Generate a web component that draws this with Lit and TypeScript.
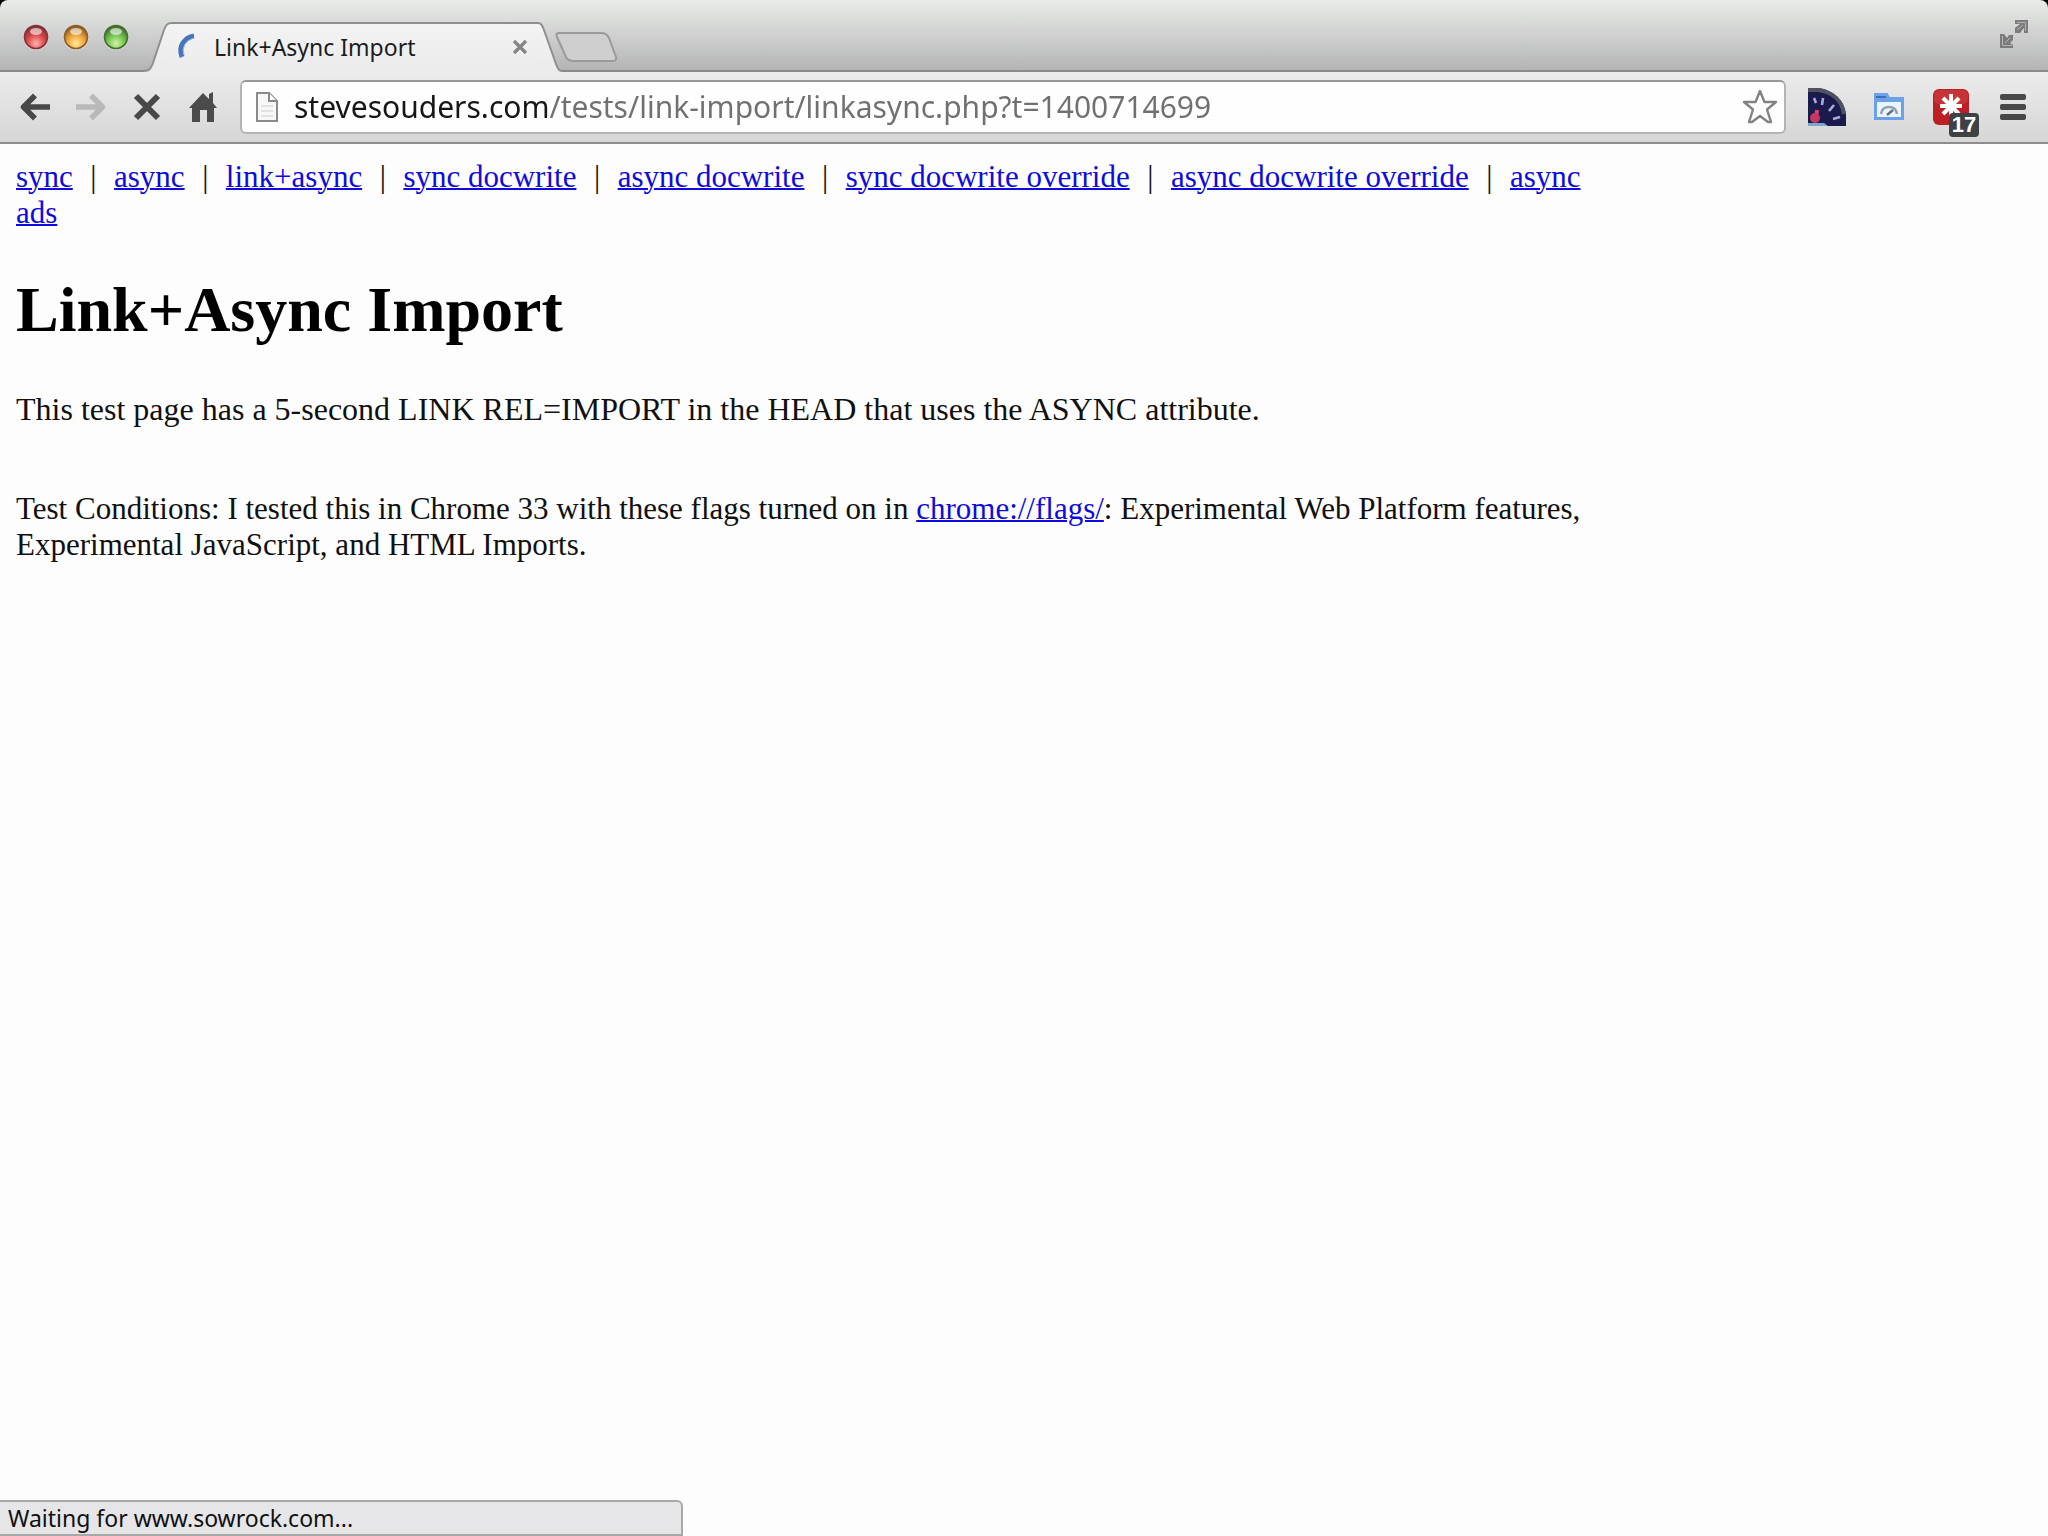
import { LitElement, html, css } from "lit";
import { customElement, property, state } from "lit/decorators.js";

const NAV_LINKS = [
  "sync",
  "async",
  "link+async",
  "sync docwrite",
  "async docwrite",
  "sync docwrite override",
  "async docwrite override",
  "async ads",
];

@customElement("tab-strip")
class TabStrip extends LitElement {
  @property() label = "";

  static styles = css`
    :host {
      display: block;
      font-family: "Noto Sans", "Open Sans", sans-serif;
    }
    .strip {
      display: flex;
      align-items: flex-end;
      height: 72px;
      box-sizing: border-box;
      padding: 0 18px 0 22px;
      background:
        linear-gradient(#8b8b8b, #8b8b8b) left bottom / 100% 2px no-repeat,
        linear-gradient(#e9ebe9 0, #dcdedc 18px, #b4b4b5 70px);
    }
    .lights {
      display: flex;
      gap: 12px;
      align-self: flex-start;
      padding-top: 23px;
    }
    button {
      appearance: none;
      border: 0;
      padding: 0;
      margin: 0;
      background: none;
      display: block;
    }
    svg {
      display: block;
    }
    .tab {
      display: flex;
      height: 50px;
      margin-left: 14px;
    }
    .face {
      display: flex;
      align-items: center;
      width: 366px;
      box-sizing: border-box;
      border-top: 2px solid #8e8f8e;
      background: linear-gradient(#f3f3f3, #ebebec);
      padding: 0 10px 3px 3px;
    }
    .title {
      flex: 1;
      padding-left: 17px;
      font-size: 23px;
      line-height: 30px;
      color: #1c1c1c;
    }
    .new {
      margin: 0 0 8px -9px;
    }
    .full {
      margin: 0 0 22px auto;
    }
  `;

  private light(name: string, edge: string, body: string, glow: string) {
    const id = "g-" + name.toLowerCase();
    return html`<button aria-label=${name}>
      <svg width="28" height="28" viewBox="0 0 28 28">
        <defs>
          <radialGradient id=${id} cx=".5" cy=".78" r=".7">
            <stop offset="0" stop-color=${glow} />
            <stop offset=".55" stop-color=${body} />
            <stop offset="1" stop-color=${edge} />
          </radialGradient>
        </defs>
        <circle cx="14" cy="15" r="12.5" fill="#eee" opacity=".5" />
        <circle cx="14" cy="14" r="11.5" fill="url(#${id})" stroke=${edge} stroke-width="1.6" />
        <ellipse cx="14" cy="8.5" rx="6" ry="3.4" fill="#fff" opacity=".6" />
      </svg>
    </button>`;
  }

  render() {
    return html`<div class="strip">
      <div class="lights">
        ${this.light("Close", "#863338", "#dd474b", "#ffb3ac")}
        ${this.light("Minimize", "#8f5e24", "#eea33c", "#ffeb9a")}
        ${this.light("Zoom", "#44702f", "#72c250", "#d1f7a2")}
      </div>
      <div class="tab">
        <svg width="28" height="50" viewBox="0 0 28 50">
          <defs>
            <linearGradient id="face" x1="0" y1="0" x2="0" y2="1">
              <stop offset="0" stop-color="#f3f3f3" />
              <stop offset="1" stop-color="#ebebec" />
            </linearGradient>
          </defs>
          <path d="M0 50V49C6 49 7 46 9 41L20 8C22 3 23 1 28 1V50Z" fill="url(#face)" />
          <path d="M0 49C6 49 7 46 9 41L20 8C22 3 23 1 28 1" fill="none" stroke="#8e8f8e" stroke-width="2" />
        </svg>
        <div class="face">
          <svg width="22" height="28" viewBox="0 0 22 28" aria-label="Loading">
            <path d="M19 3Q12 4 8 10T7 24" fill="none" stroke="#4774b8" stroke-width="5" />
            <path d="M19 5Q12 7 9.500 12T9 22" fill="none" stroke="#9cbce4" stroke-width="1" />
          </svg>
          <span class="title">${this.label}</span>
          <button aria-label="Close tab">
            <svg width="16" height="16" viewBox="0 0 16 16">
              <path d="M2 2L14 14M14 2L2 14" stroke="#858585" stroke-width="3.2" />
            </svg>
          </button>
        </div>
        <svg width="24" height="50" viewBox="0 0 24 50">
          <path d="M0 1C3 1 4 3 6 8L18 42C20 47 21 49 24 49V50H0Z" fill="url(#face)" />
          <path d="M0 1C3 1 4 3 6 8L18 42C20 47 21 49 24 49" fill="none" stroke="#8e8f8e" stroke-width="2" />
        </svg>
      </div>
      <button class="new" aria-label="New tab">
        <svg width="66" height="34" viewBox="0 0 66 34">
          <path d="M6 3H48Q54 3 56 8L63 27Q64 31 60 31H21Q15 31 13 27L4 7Q2 3 6 3Z" fill="#cfcfd0" stroke="#999a99" stroke-width="2" />
        </svg>
      </button>
      <button class="full" aria-label="Enter full screen">
        <svg width="32" height="32" viewBox="0 0 32 32" fill="#7c7c7c">
          <path d="M17 2H30V15H26V10L22 15H17V10L22 6H17Z" />
          <path d="M2 16H6L9 20L11 17H15V22L12 25L15 27V30H2Z" />
          <path d="M19 4.500H27.500V13M4.500 18V27.500H14M19 12L25 7M7 25L12 20" fill="none" stroke="#b4b4b4" stroke-width="1" />
        </svg>
      </button>
    </div>`;
  }
}

@customElement("nav-toolbar")
class NavToolbar extends LitElement {
  @property() host = "";
  @property() path = "";

  static styles = css`
    :host {
      display: block;
      font-family: "Noto Sans", "Open Sans", sans-serif;
    }
    .bar {
      display: flex;
      align-items: center;
      gap: 19px;
      height: 72px;
      box-sizing: border-box;
      padding: 0 14px 1px 16px;
      border-bottom: 2px solid #8d8d8d;
      background: linear-gradient(#ececed, #d6d6d7);
    }
    button {
      appearance: none;
      border: 0;
      padding: 0;
      background: none;
      display: grid;
      place-items: center;
      flex: none;
      width: 37px;
      height: 52px;
    }
    .wide {
      width: 43px;
    }
    svg {
      display: block;
      overflow: visible;
    }
    .omnibox {
      flex: 1;
      display: flex;
      align-items: center;
      height: 54px;
      box-sizing: border-box;
      padding: 0 3px 0 13px;
      border: 2px solid #b4b4b5;
      border-top-color: #979797;
      border-radius: 6px;
      background: #fefefe;
    }
    .url {
      flex: 1;
      min-width: 0;
      height: 42px;
      border: 0;
      outline: 0;
      padding: 0 0 0 15px;
      font-family: inherit;
      font-size: 30px;
      color: transparent;
      caret-color: #111;
      background: linear-gradient(to right, #161616 269px, #707070 269px);
      background-clip: text;
      -webkit-background-clip: text;
    }
    .badged {
      position: relative;
    }
    .count {
      position: absolute;
      left: 20px;
      top: 32px;
      width: 30px;
      height: 24px;
      border-radius: 4px;
      background: #3e4245;
      color: #fff;
      font-size: 22px;
      line-height: 24px;
      font-weight: 700;
      text-align: center;
    }
  `;

  render() {
    return html`<div class="bar">
      <button aria-label="Back">
        <svg width="32" height="28" viewBox="0 0 32 28" fill="none" stroke="#484848" stroke-width="5.500">
          <path d="M4 14H31M16 2.500L4.500 14L16 25.500" stroke-linejoin="round" />
        </svg>
      </button>
      <button aria-label="Forward">
        <svg width="32" height="28" viewBox="0 0 32 28" fill="none" stroke="#b9b9ba" stroke-width="5.500">
          <path d="M1 14H28M16 2.500L27.500 14L16 25.500" stroke-linejoin="round" />
        </svg>
      </button>
      <button aria-label="Stop">
        <svg width="28" height="28" viewBox="0 0 28 28">
          <path d="M3 3L25 25M25 3L3 25" stroke="#484848" stroke-width="6" />
        </svg>
      </button>
      <button aria-label="Home">
        <svg width="28" height="32" viewBox="0 0 28 32" fill="#4b4b4b">
          <path d="M14 2L20 8V3L24 1V12L28 17H25V31H18V19H11V31H3V17H0Z" />
        </svg>
      </button>
      <div class="omnibox">
        <svg width="24" height="32" viewBox="0 0 24 32">
          <path d="M2 2H14L22 10V30H2Z" fill="#f7f7f7" stroke="#8a8a8a" stroke-width="2" />
          <path d="M14 2V10H22" fill="#fff" stroke="#8a8a8a" stroke-width="2" />
          <path d="M6 15H18M6 20H18M6 25H18" stroke="#e2e2e2" stroke-width="2" />
        </svg>
        <input class="url" type="text" aria-label="Address" spellcheck="false" .value=${this.host + this.path} />
        <button class="wide" aria-label="Bookmark this page">
          <svg width="36" height="36" viewBox="0 0 36 36">
            <path d="M18 2L22.500 13H34L25 20.500L29 33H26L18 27L10 33H7L11 20.500L2 13H13.500Z" fill="#fff" stroke="#828282" stroke-width="2.400" stroke-linejoin="round" />
          </svg>
        </button>
      </div>
      <button class="wide" aria-label="Speed gauge">
        <svg width="38" height="38" viewBox="0 0 38 38">
          <path d="M0 0H10C26 2 36 12 38 26V38H0Z" fill="#1b1a4d" />
          <path d="M0 2H10C25 4 34 13 36 26" fill="none" stroke="#50525f" stroke-width="4" />
          <path d="M6 10L8 15M15 10L14 17M26 17L21 23M32 29L25 31" stroke="#a9abe0" stroke-width="2.600" />
          <path d="M9 22L8 32" stroke="#e0435d" stroke-width="4" />
          <circle cx="7" cy="30" r="5" fill="#c43861" />
          <path d="M0 35H16L20 38H0Z" fill="#7ba6cf" />
        </svg>
      </button>
      <button class="wide" aria-label="Page speed">
        <svg width="32" height="28" viewBox="0 0 32 28">
          <path d="M2 1H14L16 5H30V26H2Z" fill="#6ba1e6" stroke="#6ba1e6" stroke-width="2" />
          <path d="M3 4H13" stroke="#3d6eb0" stroke-width="2" />
          <path d="M4 9H28V24H4Z" fill="#eaf4fe" />
          <path d="M8 21Q9 14 16 14T24 21" fill="none" stroke="#8fa3b0" stroke-width="2.500" />
          <path d="M14 22L20 17" stroke="#61727d" stroke-width="2.500" />
        </svg>
      </button>
      <button class="wide badged" aria-label="Passwords">
        <svg width="42" height="38" viewBox="0 0 42 38">
          <rect x="3" y="1" width="36" height="36" rx="6" fill="#bd1f25" />
          <rect x="4" y="2" width="34" height="14" rx="5" fill="#d2494b" opacity=".5" />
          <path d="M21 6V30M10 18H32M13 10L29 26M29 10L13 26" stroke="#fff" stroke-width="4" />
        </svg>
        <span class="count">17</span>
      </button>
      <button class="wide" aria-label="Menu">
        <svg width="26" height="28" viewBox="0 0 26 28" fill="#484848">
          <rect y="1" width="26" height="6" rx="2" />
          <rect y="11" width="26" height="6" rx="2" />
          <rect y="21" width="26" height="6" rx="2" />
        </svg>
      </button>
    </div>`;
  }
}

@customElement("app-root")
class AppRoot extends LitElement {
  @state() private links = NAV_LINKS;

  static styles = css`
    :host {
      display: flex;
      flex-direction: column;
      min-height: 100vh;
      background: #fdfdfd;
      color: #101010;
      font-family: "Liberation Serif", "Times New Roman", serif;
      font-size: 31px;
      line-height: 36px;
    }
    .chrome {
      background: #000;
    }
    .top {
      display: block;
      border-radius: 8px 8px 0 0;
      overflow: hidden;
    }
    main {
      flex: 1;
      padding: 15px 16px;
      max-width: 1590px;
    }
    a {
      color: #0f0bdc;
      text-decoration: underline;
      text-decoration-thickness: 2px;
    }
    .sep {
      margin: 0 2px;
    }
    h1 {
      margin: 43px 0 45px;
      font-size: 64px;
      line-height: 72px;
      font-weight: 700;
      color: #000;
    }
    p {
      margin: 0 0 64px;
    }
    .lead {
      font-size: 32px;
    }
    .status {
      align-self: flex-start;
      box-sizing: border-box;
      width: 33.35%;
      padding: 0 8px;
      border: 2px solid #a8a8a8;
      border-left-width: 0;
      border-radius: 0 6px 0 0;
      background: #e6e6e8;
      font-family: "Noto Sans", "Open Sans", sans-serif;
      font-size: 23px;
      line-height: 32px;
    }
  `;

  render() {
    return html`
      <div class="chrome">
        <tab-strip class="top" label="Link+Async Import"></tab-strip>
        <nav-toolbar host="stevesouders.com" path="/tests/link-import/linkasync.php?t=1400714699"></nav-toolbar>
      </div>
      <main>
        <nav>
          ${this.links.map(
            (l, i) => html`${i ? html`&nbsp; <span class="sep">|</span> &nbsp;` : ""}<a href="#">${l}</a>`
          )}
        </nav>
        <h1>Link+Async Import</h1>
        <p class="lead">This test page has a 5-second LINK REL=IMPORT in the HEAD that uses the ASYNC attribute.</p>
        <p>
          Test Conditions: I tested this in Chrome 33 with these flags turned on in
          <a href="chrome://flags/">chrome://flags/</a>: Experimental Web Platform features, Experimental JavaScript,
          and HTML Imports.
        </p>
      </main>
      <div class="status" role="status">Waiting for www.sowrock.com...</div>
    `;
  }
}
